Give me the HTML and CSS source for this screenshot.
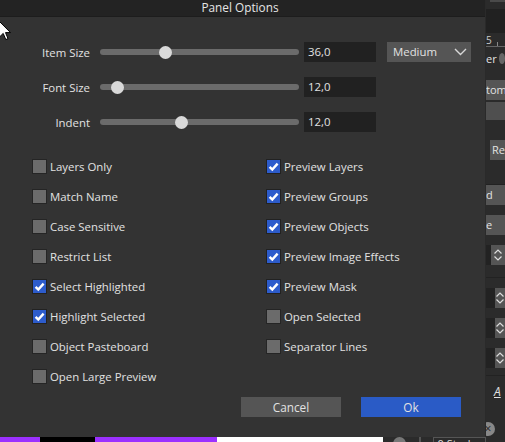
FILE: index.html
```html
<!DOCTYPE html>
<html>
<head>
<meta charset="utf-8">
<link rel="stylesheet" href="styles.css">
</head>
<body>
<div class="app">
  <div class="main">
    <div class="dialog">
      <div class="titlebar">Panel Options</div>
      <div class="content">
        <div class="sliders">
          <div class="srow">
            <div class="slabel">Item Size</div>
            <div class="slider"><div class="thumb" style="left:65px"></div></div>
            <div class="field">36,0</div>
            <div class="dropdown"><span>Medium</span>
              <svg width="13" height="8" viewBox="0 0 13 8"><path d="M1 1 L6.5 6.5 L12 1" fill="none" stroke="#d8d8d8" stroke-width="1.4"/></svg>
            </div>
          </div>
          <div class="srow">
            <div class="slabel">Font Size</div>
            <div class="slider"><div class="thumb" style="left:17px"></div></div>
            <div class="field">12,0</div>
          </div>
          <div class="srow">
            <div class="slabel">Indent</div>
            <div class="slider"><div class="thumb" style="left:81px"></div></div>
            <div class="field">12,0</div>
          </div>
        </div>
        <div class="checks">
          <div class="col left">
            <div class="chk"><span class="box"></span>Layers Only</div>
            <div class="chk"><span class="box"></span>Match Name</div>
            <div class="chk"><span class="box"></span>Case Sensitive</div>
            <div class="chk"><span class="box"></span>Restrict List</div>
            <div class="chk"><span class="box on"><svg width="13" height="13" viewBox="0 0 13 13"><path d="M2.6 6.8 L5.3 9.6 L10.6 3.6" fill="none" stroke="#fff" stroke-width="2.4"/></svg></span>Select Highlighted</div>
            <div class="chk"><span class="box on"><svg width="13" height="13" viewBox="0 0 13 13"><path d="M2.6 6.8 L5.3 9.6 L10.6 3.6" fill="none" stroke="#fff" stroke-width="2.4"/></svg></span>Highlight Selected</div>
            <div class="chk"><span class="box"></span>Object Pasteboard</div>
            <div class="chk"><span class="box"></span>Open Large Preview</div>
          </div>
          <div class="col">
            <div class="chk"><span class="box on"><svg width="13" height="13" viewBox="0 0 13 13"><path d="M2.6 6.8 L5.3 9.6 L10.6 3.6" fill="none" stroke="#fff" stroke-width="2.4"/></svg></span>Preview Layers</div>
            <div class="chk"><span class="box on"><svg width="13" height="13" viewBox="0 0 13 13"><path d="M2.6 6.8 L5.3 9.6 L10.6 3.6" fill="none" stroke="#fff" stroke-width="2.4"/></svg></span>Preview Groups</div>
            <div class="chk"><span class="box on"><svg width="13" height="13" viewBox="0 0 13 13"><path d="M2.6 6.8 L5.3 9.6 L10.6 3.6" fill="none" stroke="#fff" stroke-width="2.4"/></svg></span>Preview Objects</div>
            <div class="chk"><span class="box on"><svg width="13" height="13" viewBox="0 0 13 13"><path d="M2.6 6.8 L5.3 9.6 L10.6 3.6" fill="none" stroke="#fff" stroke-width="2.4"/></svg></span>Preview Image Effects</div>
            <div class="chk"><span class="box on"><svg width="13" height="13" viewBox="0 0 13 13"><path d="M2.6 6.8 L5.3 9.6 L10.6 3.6" fill="none" stroke="#fff" stroke-width="2.4"/></svg></span>Preview Mask</div>
            <div class="chk"><span class="box"></span>Open Selected</div>
            <div class="chk"><span class="box"></span>Separator Lines</div>
          </div>
        </div>
        <div class="buttons">
          <div class="btn cancel">Cancel</div>
          <div class="btn ok">Ok</div>
        </div>
      </div>
    </div>
    <div class="strip">
      <div class="s-purple a"></div>
      <div class="s-black"></div>
      <div class="s-purple b"></div>
      <div class="s-white"></div>
      <div class="s-dark">
        <span class="s-circle"></span>
        <span class="s-bar"></span>
        <span class="s-field">0 Stroke</span>
      </div>
    </div>
  </div>
  <div class="side">
    <div class="sd top"><span class="topbox"></span></div>
    <div class="sd darkband"></div>
    <div class="sd ruler"><span>5</span><span class="tick"></span></div>
    <div class="sd er"><span>er</span><span class="ico"></span></div>
    <div class="sd sbox b1">tom</div>
    <div class="sd sbox b2"></div>
    <div class="sd sbox b3">Re</div>
    <div class="sd sep1"></div>
    <div class="sd sbox b4">d</div>
    <div class="sd sbox b5">e</div>
    <div class="sd spin s1"><span class="fld"></span><span class="arr"><svg width="10" height="14" viewBox="0 0 10 14"><path d="M1.5 5.5 L5 2 L8.5 5.5 M1.5 8.5 L5 12 L8.5 8.5" fill="none" stroke="#ddd" stroke-width="1.2"/></svg></span></div>
    <div class="sd sep2"></div>
    <div class="sd spin s2"><span class="fld"></span><span class="arr"><svg width="10" height="14" viewBox="0 0 10 14"><path d="M1.5 5.5 L5 2 L8.5 5.5 M1.5 8.5 L5 12 L8.5 8.5" fill="none" stroke="#ddd" stroke-width="1.2"/></svg></span></div>
    <div class="sd spin s2"><span class="fld"></span><span class="arr"><svg width="10" height="14" viewBox="0 0 10 14"><path d="M1.5 5.5 L5 2 L8.5 5.5 M1.5 8.5 L5 12 L8.5 8.5" fill="none" stroke="#ddd" stroke-width="1.2"/></svg></span></div>
    <div class="sd spin s2"><span class="fld"></span><span class="arr"><svg width="10" height="14" viewBox="0 0 10 14"><path d="M1.5 5.5 L5 2 L8.5 5.5 M1.5 8.5 L5 12 L8.5 8.5" fill="none" stroke="#ddd" stroke-width="1.2"/></svg></span></div>
    <div class="sd sep3"></div>
    <div class="sd aicon"><span>A</span></div>
    <div class="sd xrow"><span class="xc">×</span></div>
  </div>
</div>
<svg class="cursor" width="14" height="22" viewBox="0 0 14 22">
  <path d="M0.5 0.5 L0.5 16 L4.2 12.4 L6.8 18.6 L9 17.6 L6.5 11.6 L11.5 11.6 Z" fill="#fff" stroke="#000" stroke-width="1"/>
</svg>
</body>
</html>
```

FILE: styles.css
```css
* { box-sizing: border-box; }
html, body { margin: 0; padding: 0; }
body {
  width: 505px;
  height: 442px;
  overflow: hidden;
  background: #2b2b2b;
  font-family: "Open Sans", "Noto Sans", sans-serif;
  font-size: 11.4px;
  color: #e2e2e2;
  position: relative;
}
.app { display: flex; width: 505px; height: 442px; }
.main { width: 486px; display: flex; flex-direction: column; }
.dialog {
  height: 437px;
  background: #333333;
  border-right: 1px solid #2a2a2a;
  display: flex;
  flex-direction: column;
}
.titlebar {
  height: 17px;
  background: #232323;
  border-bottom: 1px solid #1d1d1d;
  text-align: center;
  font-size: 11.8px;
  line-height: 15px;
  color: #e6e6e6;
  padding-right: 5px;
}
.content { padding: 25px 0 0 0; display: flex; flex-direction: column; }
.sliders { display: flex; flex-direction: column; gap: 15px; }
.srow { display: flex; align-items: center; height: 20px; }
.slabel { width: 90px; text-align: right; padding-right: 0; }
.slider {
  margin-left: 10px;
  width: 199px;
  height: 6px;
  border-radius: 3px;
  background: #6b6b6b;
  position: relative;
}
.thumb {
  position: absolute;
  top: -3.5px;
  width: 13px;
  height: 13px;
  margin-left: -6.5px;
  border-radius: 50%;
  background: #d9d9d9;
}
.field {
  margin-left: 5px;
  width: 72px;
  height: 20px;
  background: #212121;
  padding-left: 4px;
  line-height: 20px;
}
.dropdown {
  margin-left: 11px;
  width: 84px;
  height: 20px;
  background: #555555;
  display: flex;
  align-items: center;
  justify-content: space-between;
  padding: 0 4px 0 6px;
}
.dropdown span { line-height: 20px; }
.checks { display: flex; margin-top: 19px; }
.col { display: flex; flex-direction: column; }
.col.left { width: 266px; padding-left: 32px; }
.chk { height: 30px; display: flex; align-items: center; }
.box {
  width: 15px;
  height: 15px;
  background: #6b6b6b;
  border: 1px solid #252525;
  margin-right: 3px;
  display: flex;
  align-items: center;
  justify-content: center;
}
.box.on { background: #2d5ccc; border-color: #222; }
.buttons { display: flex; margin-top: 6px; padding-left: 241px; gap: 20px; }
.btn {
  width: 100px;
  height: 20px;
  line-height: 20px;
  text-align: center;
  font-size: 11.8px;
}
.btn.cancel { background: #555555; }
.btn.ok { background: #2a5bc6; }
.strip { display: flex; height: 5px; }
.s-purple { background: #9b30ff; }
.s-purple.a { width: 40px; }
.s-black { width: 55px; background: #000; }
.s-purple.b { width: 122px; }
.s-white { width: 166px; background: #fff; }
.s-dark { flex: 1; background: #2b2b2b; overflow: hidden; display: flex; }
.s-circle { width: 14px; height: 14px; border-radius: 50%; background: #777; margin: 0 0 0 10px; }
.s-bar { width: 2px; height: 8px; background: #555; margin-left: 13px; }
.s-field { margin-left: 12px; border: 1px solid #555; width: 58px; height: 14px; font-size: 11px; line-height: 12px; padding-left: 4px; color: #ddd; white-space: nowrap; overflow: hidden; }
.side { width: 19px; display: flex; flex-direction: column; overflow: hidden; background: #2b2b2b; }
.sd { flex: none; }
.top { height: 9px; padding-left: 4px; }
.topbox { display: block; height: 2px; background: #4a4a4a; }
.darkband { height: 24px; background: #212121; }
.ruler { height: 14px; border-bottom: 1px solid #666; display: flex; align-items: flex-end; font-size: 10px; line-height: 12px; color: #ccc; gap: 5px; }
.ruler .tick { width: 1px; height: 4px; background: #888; }
.er { height: 23px; display: flex; align-items: center; font-size: 11px; gap: 2px; }
.er .ico { width: 11px; height: 11px; border-radius: 50%; background: #666; }
.sbox { background: #555; height: 20px; line-height: 20px; font-size: 11px; white-space: nowrap; overflow: hidden; }
.b1 { margin-top: 10px; }
.b2 { margin-top: 2px; height: 18px; background: #4f4f4f; }
.b3 { margin-top: 20px; margin-left: 4px; padding-left: 2px; }
.sep1 { height: 25px; border-bottom: 1px solid #222; }
.b4 { margin-top: 0; }
.b5 { margin-top: 10px; }
.spin { height: 20px; display: flex; }
.spin .fld { background: #222; height: 20px; }
.spin .arr { background: #555; height: 20px; width: 14px; display: flex; align-items: center; justify-content: center; }
.s1 { margin-top: 10px; }
.s1 .fld { width: 5px; }
.sep2 { height: 13px; border-bottom: 1px solid #222; }
.s2 { margin-top: 10px; }
.s2 .fld { width: 13px; }
.sep3 { height: 8px; border-bottom: 1px solid #222; }
.aicon { height: 30px; display: flex; align-items: center; padding-left: 8px; font-size: 12px; font-style: italic; text-decoration: underline; }
.xrow { height: 30px; padding-top: 15px; }
.xc { display: inline-block; width: 14px; height: 14px; border-radius: 50%; background: #888; color: #222; font-size: 12px; line-height: 13px; text-align: center; margin-left: -5px; }
.cursor { position: absolute; left: -1px; top: 21px; }
```
